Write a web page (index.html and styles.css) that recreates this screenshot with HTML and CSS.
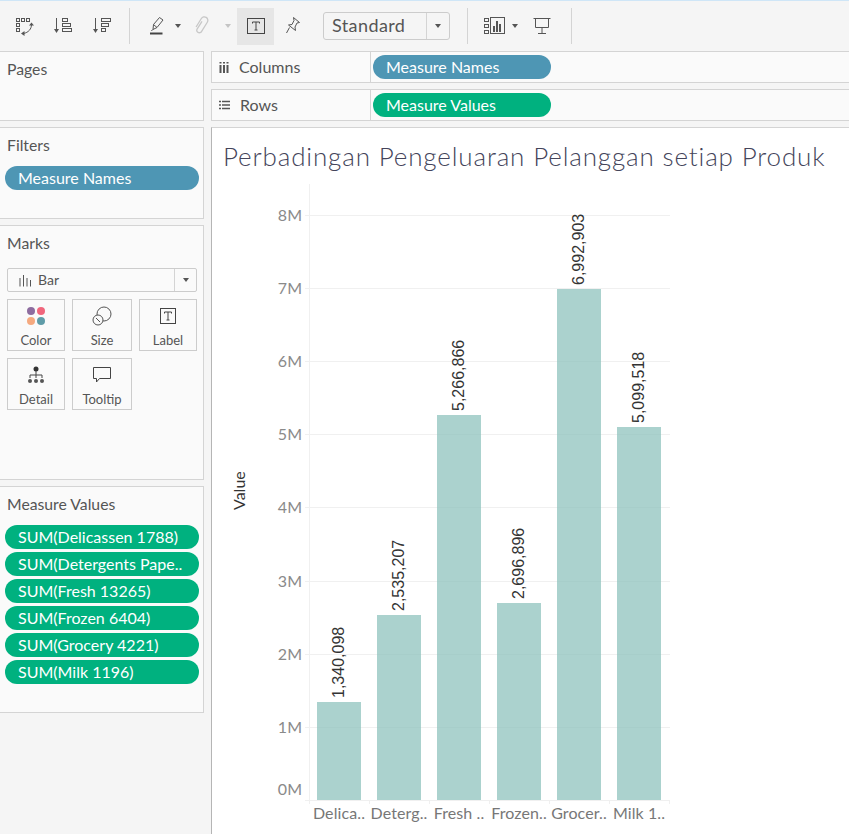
FILE: index.html
```html
<!DOCTYPE html>
<html lang="en">
<head>
    <meta charset="UTF-8">
    <title>Perbadingan Pengeluaran Pelanggan setiap Produk</title>
    <link rel="stylesheet" href="styles.css">
</head>
<body>
    <!-- Toolbar -->
    <div class="toolbar">
        <div class="tool">
            <svg width="20" height="20" viewBox="0 0 20 20" class="icon"><g fill="none" stroke="#555"><rect x="2.500" y="2.500" width="3" height="3"/><rect x="7.500" y="2.500" width="3" height="3"/><rect x="12.500" y="2.500" width="3" height="3"/><rect x="2.500" y="7.500" width="3" height="3"/><rect x="2.500" y="12.500" width="3" height="3"/><path d="M17.500 8.500c0 4.500-3 8-8 9"/></g><path d="M15 9.500l2.500-3 2.500 3zM10.500 15v5l-3.500-2.500z" fill="#555"/></svg>
        </div>
        <div class="tool tool-sort">
            <svg width="20" height="20" viewBox="0 0 20 20" class="icon"><path d="M3.500 2v13" stroke="#555" fill="none"/><path d="M1 13h5l-2.500 4z" fill="#555"/><g fill="none" stroke="#555"><rect x="9.500" y="2.500" width="5" height="3"/><rect x="9.500" y="7.500" width="8" height="3"/><rect x="9.500" y="12.500" width="9" height="3"/></g></svg>
        </div>
        <div class="tool tool-sort">
            <svg width="20" height="20" viewBox="0 0 20 20" class="icon"><path d="M3.500 2v13" stroke="#555" fill="none"/><path d="M1 13h5l-2.500 4z" fill="#555"/><g fill="none" stroke="#555"><rect x="9.500" y="2.500" width="9" height="3"/><rect x="9.500" y="7.500" width="7" height="3"/><rect x="9.500" y="12.500" width="4" height="3"/></g></svg>
        </div>
        <div class="sep"></div>
        <div class="tool tool-after-sep">
            <svg width="20" height="20" viewBox="0 0 20 20" class="icon"><path d="M6 13.500l.5-5 6-7 3.500 2.500-6 7.500zM6.500 8.500l3.500 3M5.500 13.500l-1 1.500" fill="none" stroke="#555"/><path d="M3 17.500h12.500" stroke="#444" stroke-width="2"/></svg>
        </div>
        <div class="caret"></div>
        <div class="tool tool-small">
            <svg width="16" height="20" viewBox="0 0 16 20" class="icon"><g transform="rotate(32 8 10)"><path d="M5.500 6v9a2.500 2.500 0 0 0 5 0V4a3.500 3.500 0 0 0-7 0v10" fill="none" stroke="#c8c8c8" stroke-width="1.300"/></g></svg>
        </div>
        <div class="caret caret-off"></div>
        <div class="tool tool-on">
            <svg width="18" height="16" viewBox="0 0 18 16" class="icon"><rect x=".5" y=".5" width="17" height="15" fill="none" stroke="#444"/><path d="M5.500 5.500v-1.500h7v1.500M9 4v8M7.500 12h3" fill="none" stroke="#444"/></svg>
        </div>
        <div class="tool">
            <svg width="16" height="20" viewBox="0 0 16 20" class="icon"><path d="M8.500 1.500l6 5-2.500 .5-2 4 .5 3.500-7-5.500 3.500-.5 2-4zM4.500 11.500l-3 5.500" fill="none" stroke="#555"/></svg>
        </div>
        <div class="fit-select">
            <span class="fit-text">Standard</span>
            <span class="fit-arrow"><span class="caret"></span></span>
        </div>
        <div class="sep sep-fit"></div>
        <div class="tool tool-small tool-showme">
            <svg width="21" height="18" viewBox="0 0 21 18" class="icon"><g fill="none" stroke="#555"><rect x=".5" y="1.500" width="4" height="3"/><rect x=".5" y="7.500" width="4" height="3"/><rect x=".5" y="13.500" width="4" height="3"/><rect x="6.500" y=".5" width="14" height="16"/></g><path d="M9 9h2v6H9zM12 4h2v11h-2zM15 7h2v8h-2z" fill="#555"/></svg>
        </div>
        <div class="caret caret-small"></div>
        <div class="tool tool-small tool-present">
            <svg width="18" height="18" viewBox="0 0 18 18" class="icon"><path d="M.5 1.500h17M2.500 1.500v9h13v-9M9 10.500v6M5 16.500h8" fill="none" stroke="#555"/></svg>
        </div>
        <div class="sep sep-end"></div>
    </div>

    <div class="workspace">
        <!-- Left side -->
        <div class="sidebar">
            <div class="card card-pages">
                <div class="card-title">Pages</div>
            </div>
            <div class="card card-filters">
                <div class="card-title">Filters</div>
                <div class="pill pill-blue pill-filter">Measure Names</div>
            </div>
            <div class="card card-marks">
                <div class="card-title">Marks</div>
                <div class="mark-select">
                    <svg width="12" height="13" viewBox="0 0 12 13" class="bar-icon"><path d="M1 4v8.500M4.500 1v11.500M8 4v8.500M11.500 6v6.500" stroke="#555" fill="none"/></svg>
                    <span class="mark-text">Bar</span>
                    <span class="mark-arrow"><span class="caret"></span></span>
                </div>
                <div class="mark-grid">
                    <div class="mark-btn">
                        <svg width="20" height="20" viewBox="0 0 20 20"><circle cx="5" cy="5" r="4" fill="#8d6c9f"/><circle cx="15" cy="5" r="4" fill="#f0667c"/><circle cx="5" cy="15" r="4" fill="#f5a97f"/><circle cx="15" cy="15" r="4" fill="#5f9ca8"/></svg>
                        <span>Color</span>
                    </div>
                    <div class="mark-btn">
                        <svg width="20" height="20" viewBox="0 0 20 20" fill="none" stroke="#555"><circle cx="12" cy="8" r="7"/><circle cx="6" cy="14" r="5" fill="#fafafa"/><path d="M4 12l4 4"/></svg>
                        <span>Size</span>
                    </div>
                    <div class="mark-btn">
                        <svg width="20" height="20" viewBox="0 0 20 20" fill="none" stroke="#444"><rect x="2.500" y="2.500" width="15" height="15"/><path d="M6.500 7.500v-1.500h7v1.500M10 6v8M8.500 14h3"/></svg>
                        <span>Label</span>
                    </div>
                    <div class="mark-btn">
                        <svg width="20" height="20" viewBox="0 0 20 20"><circle cx="10" cy="4" r="2.500" fill="#333"/><path d="M10 6v7M4 13v-3h12v3" fill="none" stroke="#444"/><circle cx="4" cy="16" r="2" fill="#555"/><circle cx="10" cy="16" r="2" fill="#555"/><circle cx="16" cy="16" r="2" fill="#555"/></svg>
                        <span>Detail</span>
                    </div>
                    <div class="mark-btn">
                        <svg width="20" height="20" viewBox="0 0 20 20" fill="none" stroke="#444"><path d="M1.500 2.500h17v11h-11l-3 3.500v-3.500h-3z"/></svg>
                        <span>Tooltip</span>
                    </div>
                </div>
            </div>
            <div class="card card-values">
                <div class="card-title">Measure Values</div>
                <div class="pill-list">
                    <div class="pill pill-green">SUM(Delicassen 1788)</div>
                    <div class="pill pill-green">SUM(Detergents Pape..</div>
                    <div class="pill pill-green">SUM(Fresh 13265)</div>
                    <div class="pill pill-green">SUM(Frozen 6404)</div>
                    <div class="pill pill-green">SUM(Grocery 4221)</div>
                    <div class="pill pill-green">SUM(Milk 1196)</div>
                </div>
            </div>
        </div>

        <!-- Shelves and view -->
        <div class="main">
            <div class="shelf">
                <div class="shelf-label">
                    <svg width="10" height="11" viewBox="0 0 10 11" class="shelf-icon"><path d="M1.500 3v8M5 3v8M8.500 3v8" stroke="#555" stroke-width="2" fill="none"/><path d="M.5 0h2v1.500h-2zM4 0h2v1.500H4zM7.500 0h2v1.500h-2z" fill="#555"/></svg>
                    <span class="shelf-text">Columns</span>
                </div>
                <div class="pill pill-blue pill-shelf">Measure Names</div>
            </div>
            <div class="shelf">
                <div class="shelf-label">
                    <svg width="11" height="10" viewBox="0 0 11 10" class="shelf-icon"><path d="M3 1.500h8M3 5h8M3 8.500h8M0 1.500h2M0 5h2M0 8.500h2" stroke="#555" stroke-width="1.600" fill="none"/></svg>
                    <span class="shelf-text">Rows</span>
                </div>
                <div class="pill pill-green pill-shelf">Measure Values</div>
            </div>
            <div class="view">
                <div class="view-title">Perbadingan Pengeluaran Pelanggan setiap Produk</div>
                <svg class="chart" width="637" height="664" viewBox="212 170 637 664">
                    <!-- gridlines -->
                    <g class="grid">
                        <path d="M305 215.500H670M305 288.500H670M305 361.500H670M305 434.500H670M305 507.500H670M305 581.500H670M305 654.500H670M305 727.500H670"/>
                    </g>
                    <path class="axis" d="M309.500 184V800M305 800.500H670M309.500 800v4M369.500 800v4M429.500 800v4M489.500 800v4M549.500 800v4M609.500 800v4M669.500 800v4"/>

                    <!-- bars -->
                    <g class="bars">
                        <rect x="317" y="702" width="44" height="98"/>
                        <rect x="377" y="615" width="44" height="185"/>
                        <rect x="437" y="415" width="44" height="385"/>
                        <rect x="497" y="603" width="44" height="197"/>
                        <rect x="557" y="289" width="44" height="511"/>
                        <rect x="617" y="427" width="44" height="373"/>
                    </g>

                    <!-- bar labels -->
                    <g class="bar-label">
                        <text transform="translate(344 698) rotate(-90)">1,340,098</text>
                        <text transform="translate(404 611) rotate(-90)">2,535,207</text>
                        <text transform="translate(464 411) rotate(-90)">5,266,866</text>
                        <text transform="translate(524 599) rotate(-90)">2,696,896</text>
                        <text transform="translate(584 285) rotate(-90)">6,992,903</text>
                        <text transform="translate(644 423) rotate(-90)">5,099,518</text>
                    </g>

                    <!-- y axis -->
                    <g class="y-tick">
                        <text x="302" y="221">8M</text>
                        <text x="302" y="294">7M</text>
                        <text x="302" y="367">6M</text>
                        <text x="302" y="440">5M</text>
                        <text x="302" y="513">4M</text>
                        <text x="302" y="587">3M</text>
                        <text x="302" y="660">2M</text>
                        <text x="302" y="733">1M</text>
                        <text x="302" y="795">0M</text>
                    </g>
                    <text class="y-title" transform="translate(245 510) rotate(-90)">Value</text>

                    <!-- x axis -->
                    <g class="x-tick">
                        <text x="339" y="819">Delica..</text>
                        <text x="399" y="819">Deterg..</text>
                        <text x="459" y="819">Fresh ..</text>
                        <text x="519" y="819">Frozen..</text>
                        <text x="579" y="819">Grocer..</text>
                        <text x="639" y="819">Milk 1..</text>
                    </g>
                </svg>
            </div>
        </div>
    </div>
</body>
</html>
```

FILE: styles.css
```css
html, body {
    margin: 0;
    padding: 0;
}
body {
    width: 849px;
    height: 834px;
    overflow: hidden;
    background-color: #f5f5f5;
    font-family: Lato, "Open Sans", sans-serif;
    color: #555555;
}

/* toolbar */
.toolbar {
    display: flex;
    align-items: center;
    height: 50px;
    padding-left: 5px;
    border-top: 1px solid #cfe6f7;
    box-sizing: content-box;
}
.tool {
    display: flex;
    align-items: center;
    justify-content: center;
    width: 37px;
    height: 37px;
    flex: none;
}
.tool-sort {
    margin-left: 2px;
}
.tool-after-sep {
    margin-left: 8px;
}
.tool-small {
    width: 28px;
    margin-left: 7px;
}
.tool-on {
    background-color: #e6e6e6;
    margin-left: 6px;
}
.tool-showme {
    margin-left: 12px;
}
.tool-present {
    margin-left: 10px;
}
.sep {
    width: 1px;
    height: 36px;
    margin-left: 9px;
    background-color: #d4d4d4;
    flex: none;
}
.sep-fit {
    margin-left: 17px;
}
.sep-end {
    margin-left: 15px;
}
.caret {
    width: 0;
    height: 0;
    flex: none;
    border-left: 3px solid transparent;
    border-right: 3px solid transparent;
    border-top: 4px solid #555555;
}
.caret-off {
    border-top-color: #c4c4c4;
    margin-left: 9px;
}
.caret-small {
    margin-left: 4px;
}
.fit-select {
    display: flex;
    align-items: center;
    width: 127px;
    height: 28px;
    margin-left: 12px;
    box-sizing: border-box;
    border: 1px solid #cccccc;
    border-radius: 3px;
    flex: none;
}
.fit-text {
    flex: 1;
    padding: 0 0 2px 8px;
    font-size: 18px;
    letter-spacing: 0.4px;
}
.fit-arrow {
    display: flex;
    align-items: center;
    justify-content: center;
    width: 22px;
    height: 100%;
    border-left: 1px solid #d4d4d4;
}

/* layout */
.workspace {
    display: flex;
    height: 783px;
}
.sidebar {
    width: 205px;
    margin-left: -1px;
    flex: none;
}
.main {
    flex: 1;
    margin-left: 7px;
    min-width: 0;
}

/* side cards */
.card {
    box-sizing: border-box;
    margin-bottom: 6px;
    background-color: #fafafa;
    border: 1px solid #d4d4d4;
}
.card-pages {
    height: 70px;
}
.card-filters {
    height: 92px;
}
.card-marks {
    height: 255px;
}
.card-values {
    height: 227px;
}
.card-title {
    padding: 7px 0 0 7px;
    font-size: 15.75px;
    line-height: 19px;
}

/* pills */
.pill {
    box-sizing: border-box;
    height: 24px;
    padding-left: 13px;
    border-radius: 12px;
    color: #ffffff;
    font-size: 16px;
    line-height: 24px;
    white-space: nowrap;
    overflow: hidden;
}
.pill-blue {
    background-color: #4e96b4;
}
.pill-green {
    background-color: #00b17f;
}
.pill-filter {
    width: 194px;
    margin: 12px 0 0 5px;
}
.pill-list {
    display: flex;
    flex-direction: column;
    gap: 3px;
    margin: 12px 0 0 5px;
    width: 194px;
}
.pill-shelf {
    width: 178px;
    margin-left: 2px;
}

/* marks card */
.mark-select {
    display: flex;
    align-items: center;
    box-sizing: border-box;
    width: 190px;
    height: 24px;
    margin: 16px 0 0 7px;
    border: 1px solid #cccccc;
    border-radius: 2px;
    font-size: 14px;
}
.bar-icon {
    margin-left: 11px;
}
.mark-text {
    flex: 1;
    margin-left: 7px;
    padding-bottom: 1px;
}
.mark-arrow {
    display: flex;
    align-items: center;
    justify-content: center;
    width: 21px;
    height: 100%;
    border-left: 1px solid #d4d4d4;
}
.mark-grid {
    display: grid;
    grid-template-columns: 58px 60px 58px;
    grid-auto-rows: 52px;
    gap: 7px;
    margin: 7px 0 0 7px;
}
.mark-btn {
    display: flex;
    flex-direction: column;
    align-items: center;
    box-sizing: border-box;
    padding-top: 6px;
    border: 1px solid #cccccc;
    font-size: 13px;
    line-height: 16px;
    color: #555555;
}
.mark-btn span {
    margin-top: 6px;
}

/* shelves */
.shelf {
    display: flex;
    align-items: center;
    box-sizing: border-box;
    height: 32px;
    margin-bottom: 6px;
    background-color: #fafafa;
    border: 1px solid #d4d4d4;
    border-right: none;
}
.shelf-label {
    display: flex;
    align-items: center;
    box-sizing: border-box;
    width: 159px;
    height: 100%;
    padding-left: 7px;
    border-right: 1px solid #d4d4d4;
    font-size: 16px;
}
.shelf-icon {
    margin-right: 10px;
}
.shelf-text {
    padding-bottom: 2px;
}

/* view */
.view {
    height: 707px;
    background-color: #ffffff;
    border-top: 1px solid #d4d4d4;
    border-left: 1px solid #b5b5b5;
    overflow: hidden;
}
.view-title {
    height: 42px;
    padding: 10px 0 0 11px;
    box-sizing: border-box;
    font-family: Lato, sans-serif;
    font-weight: 300;
    font-size: 26px;
    line-height: 36px;
    letter-spacing: 0.85px;
    color: #44445a;
    white-space: nowrap;
}
.chart {
    display: block;
}
.grid path {
    stroke: #f0f0f0;
    fill: none;
}
.axis {
    stroke: #f0f0f0;
    fill: none;
}
.bars rect {
    fill: #8fc3bd;
    fill-opacity: 0.75;
}
.bar-label text {
    font-family: "Liberation Sans", Arial, sans-serif;
    font-size: 16px;
    fill: #333333;
}
.y-tick text {
    font-family: Lato, sans-serif;
    font-size: 16px;
    fill: #8a8a8a;
    text-anchor: end;
}
.y-title {
    font-family: Lato, sans-serif;
    font-size: 16px;
    fill: #333333;
}
.x-tick text {
    font-family: Lato, sans-serif;
    font-size: 16px;
    letter-spacing: 0.1px;
    fill: #777777;
    text-anchor: middle;
}
```
